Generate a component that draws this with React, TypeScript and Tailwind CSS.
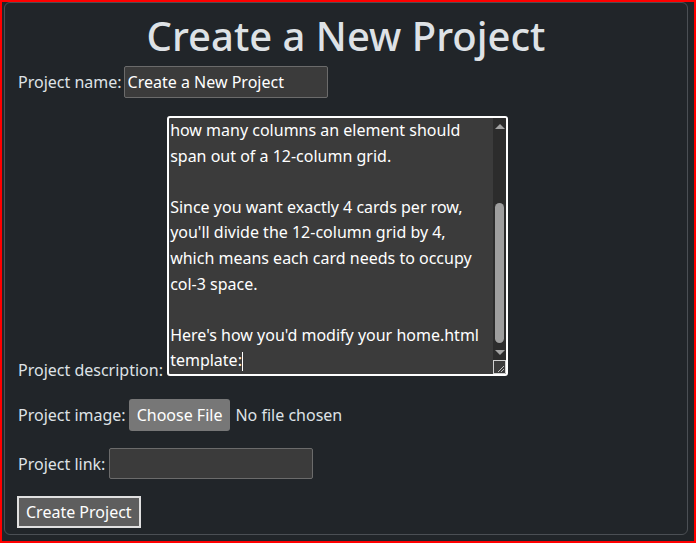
const descriptionLines = [
  'To show 4 cards in each row with Bootstrap,',
  'use the grid column classes. They tell Bootstrap',
  'how many columns an element should',
  'span out of a 12-column grid.',
  '',
  'Since you want exactly 4 cards per row,',
  "you'll divide the 12-column grid by 4,",
  'which means each card needs to occupy',
  'col-3 space.',
  '',
  "Here's how you'd modify your home.html",
]

function ScrollArrow({ down }: { down?: boolean }) {
  return (
    <svg width="10" height="6" viewBox="0 0 10 6" className="mx-auto">
      <polygon points={down ? '0,0 10,0 5,5' : '0,5 10,5 5,0'} fill="#a3a3a3" />
    </svg>
  )
}

// mimics a textarea scrolled to its end (with a dark native scrollbar)
function DescriptionBox() {
  return (
    <span className="inline-block align-baseline overflow-hidden">
      <div className="flex w-[341px] h-[260px] bg-[#3b3b3b] border-2 border-white rounded-[3px] text-white overflow-hidden">
        <div className="flex-1 flex flex-col justify-end overflow-hidden pl-[1px] leading-[25.6px] whitespace-pre">
          {descriptionLines.map((line, i) => (
            <div key={i} className="h-[25.6px] shrink-0">{line}</div>
          ))}
          <div className="h-[25.6px] shrink-0 flex items-center">
            template:<span className="inline-block w-px h-[19px] bg-white" />
          </div>
        </div>
        <div className="w-[13px] flex flex-col bg-[#2c2c2c]">
          <div className="pt-[6px] h-[14px]"><ScrollArrow /></div>
          <div className="flex-1 flex flex-col pt-[71px] pb-[4px]">
            <div className="mx-auto w-[9px] h-[140px] rounded-full bg-[#9e9e9e]" />
          </div>
          <div className="h-[12px] pt-[2px]"><ScrollArrow down /></div>
          <div className="h-[14px] border border-[#d0d0d0] bg-[#3b3b3b] relative">
            <svg width="12" height="12" viewBox="0 0 12 12" className="absolute right-0 bottom-0">
              <line x1="11" y1="5" x2="5" y2="11" stroke="#bdbdbd" strokeWidth="1" />
              <line x1="11" y1="8" x2="8" y2="11" stroke="#bdbdbd" strokeWidth="1" />
            </svg>
          </div>
        </div>
      </div>
    </span>
  )
}

export default function App() {
  return (
    <div className="w-[696px] h-[543px] border-2 border-[#ff0000] bg-[#212529] font-['Noto_Sans',sans-serif] text-[#dee2e6] overflow-hidden">
      <div className="ml-[2px] w-[684px] h-[533px] border border-[#4b4f54] rounded-md px-[13px]">
        <h1 className="text-center text-[40px] font-medium leading-[48px] mt-[9px] mb-[6px]">Create a New Project</h1>

        <form className="text-base" onSubmit={(e) => e.preventDefault()}>
          <div className="mb-[18px]">
            <label htmlFor="name">Project name:</label>
            <input
              id="name"
              type="text"
              defaultValue="Create a New Project"
              className="ml-[2px] w-[204px] h-[32px] px-[3px] bg-[#3b3b3b] border border-[#6b6b6b] rounded-[2px] text-white outline-none"
            />
          </div>

          <div className="mb-[17px]">
            <span>Project description: </span>
            <DescriptionBox />
          </div>

          <div className="mb-[17px] flex items-center">
            <span>Project image:</span>
            <span className="ml-[3px] h-[32px] px-[8px] flex items-center bg-[#777777] rounded-[3px] text-white">Choose File</span>
            <span className="ml-[5px]">No file chosen</span>
          </div>

          <div className="mb-[17px]">
            <label htmlFor="link">Project link:</label>
            <input
              id="link"
              type="text"
              className="ml-[4px] w-[204px] h-[31px] bg-[#3b3b3b] border border-[#6b6b6b] rounded-[2px] text-white outline-none"
            />
          </div>

          <button
            type="submit"
            className="-ml-px h-[32px] px-[7px] bg-[#5e5e5e] border-2 border-[#e0e0e0] text-white"
          >
            Create Project
          </button>
        </form>
      </div>
    </div>
  )
}
